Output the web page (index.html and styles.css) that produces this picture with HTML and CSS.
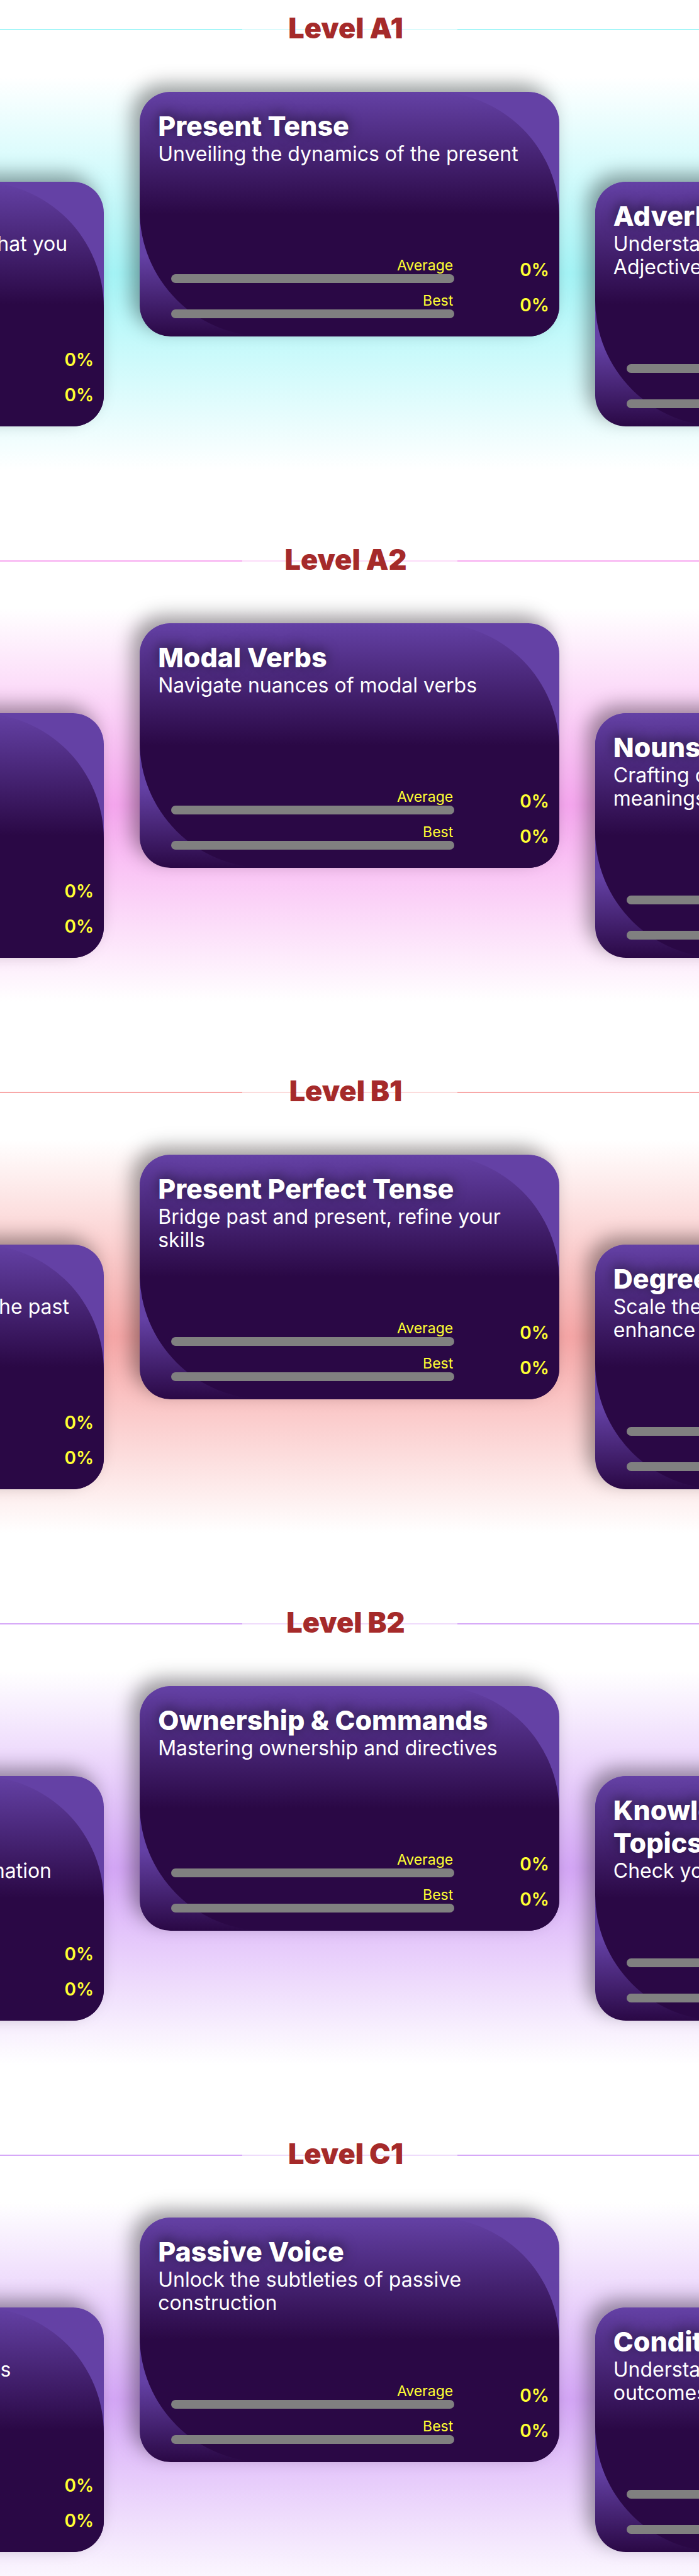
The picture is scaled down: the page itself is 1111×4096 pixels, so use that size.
FILE: index.html
```html
<!DOCTYPE html>
<html lang="en">
<head>
<meta charset="utf-8">
<meta name="viewport" content="width=device-width, initial-scale=1">
<title>English levels</title>
<link rel="stylesheet" href="styles.css">
</head>
<body>
<main class="levels">

  <section class="level aqua">
    <div class="level-head"><h2 class="level-name">Level A1</h2></div>
    <div class="carousel">
      <article class="card"><div class="card-face">
        <h3 class="card-title">Everyday Life</h3>
        <p class="card-text">Shape the story of everything that you<br>know</p>
        <div class="scores">
          <div class="score"><div class="score-track"><span class="score-label">Average</span><div class="bar"></div></div><span class="score-value">0%</span></div>
          <div class="score"><div class="score-track"><span class="score-label">Best</span><div class="bar"></div></div><span class="score-value">0%</span></div>
        </div>
      </div></article>
      <article class="card"><div class="card-face">
        <h3 class="card-title">Present Tense</h3>
        <p class="card-text">Unveiling the dynamics of the present</p>
        <div class="scores">
          <div class="score"><div class="score-track"><span class="score-label">Average</span><div class="bar"></div></div><span class="score-value">0%</span></div>
          <div class="score"><div class="score-track"><span class="score-label">Best</span><div class="bar"></div></div><span class="score-value">0%</span></div>
        </div>
      </div></article>
      <article class="card"><div class="card-face">
        <h3 class="card-title">Adverbs</h3>
        <p class="card-text">Understanding Adverbs and<br>Adjectives</p>
        <div class="scores">
          <div class="score"><div class="score-track"><span class="score-label">Average</span><div class="bar"></div></div><span class="score-value">0%</span></div>
          <div class="score"><div class="score-track"><span class="score-label">Best</span><div class="bar"></div></div><span class="score-value">0%</span></div>
        </div>
      </div></article>
    </div>
  </section>

  <section class="level pink">
    <div class="level-head"><h2 class="level-name">Level A2</h2></div>
    <div class="carousel">
      <article class="card"><div class="card-face">
        <h3 class="card-title">Past Tense</h3>
        <p class="card-text">Talk about yesterday</p>
        <div class="scores">
          <div class="score"><div class="score-track"><span class="score-label">Average</span><div class="bar"></div></div><span class="score-value">0%</span></div>
          <div class="score"><div class="score-track"><span class="score-label">Best</span><div class="bar"></div></div><span class="score-value">0%</span></div>
        </div>
      </div></article>
      <article class="card"><div class="card-face">
        <h3 class="card-title">Modal Verbs</h3>
        <p class="card-text">Navigate nuances of modal verbs</p>
        <div class="scores">
          <div class="score"><div class="score-track"><span class="score-label">Average</span><div class="bar"></div></div><span class="score-value">0%</span></div>
          <div class="score"><div class="score-track"><span class="score-label">Best</span><div class="bar"></div></div><span class="score-value">0%</span></div>
        </div>
      </div></article>
      <article class="card"><div class="card-face">
        <h3 class="card-title">Nouns</h3>
        <p class="card-text">Crafting clear and precise<br>meanings</p>
        <div class="scores">
          <div class="score"><div class="score-track"><span class="score-label">Average</span><div class="bar"></div></div><span class="score-value">0%</span></div>
          <div class="score"><div class="score-track"><span class="score-label">Best</span><div class="bar"></div></div><span class="score-value">0%</span></div>
        </div>
      </div></article>
    </div>
  </section>

  <section class="level coral">
    <div class="level-head"><h2 class="level-name">Level B1</h2></div>
    <div class="carousel">
      <article class="card"><div class="card-face">
        <h3 class="card-title">Past Perfect</h3>
        <p class="card-text">Examine actions completed in the past</p>
        <div class="scores">
          <div class="score"><div class="score-track"><span class="score-label">Average</span><div class="bar"></div></div><span class="score-value">0%</span></div>
          <div class="score"><div class="score-track"><span class="score-label">Best</span><div class="bar"></div></div><span class="score-value">0%</span></div>
        </div>
      </div></article>
      <article class="card"><div class="card-face">
        <h3 class="card-title">Present Perfect Tense</h3>
        <p class="card-text">Bridge past and present, refine your skills</p>
        <div class="scores">
          <div class="score"><div class="score-track"><span class="score-label">Average</span><div class="bar"></div></div><span class="score-value">0%</span></div>
          <div class="score"><div class="score-track"><span class="score-label">Best</span><div class="bar"></div></div><span class="score-value">0%</span></div>
        </div>
      </div></article>
      <article class="card"><div class="card-face">
        <h3 class="card-title">Degrees</h3>
        <p class="card-text">Scale the comparisons and<br>enhance precision</p>
        <div class="scores">
          <div class="score"><div class="score-track"><span class="score-label">Average</span><div class="bar"></div></div><span class="score-value">0%</span></div>
          <div class="score"><div class="score-track"><span class="score-label">Best</span><div class="bar"></div></div><span class="score-value">0%</span></div>
        </div>
      </div></article>
    </div>
  </section>

  <section class="level violet">
    <div class="level-head"><h2 class="level-name">Level B2</h2></div>
    <div class="carousel">
      <article class="card"><div class="card-face">
        <h3 class="card-title">Questions &amp;<br>Answers</h3>
        <p class="card-text">Questions that affirm the information</p>
        <div class="scores">
          <div class="score"><div class="score-track"><span class="score-label">Average</span><div class="bar"></div></div><span class="score-value">0%</span></div>
          <div class="score"><div class="score-track"><span class="score-label">Best</span><div class="bar"></div></div><span class="score-value">0%</span></div>
        </div>
      </div></article>
      <article class="card"><div class="card-face">
        <h3 class="card-title">Ownership &amp; Commands</h3>
        <p class="card-text">Mastering ownership and directives</p>
        <div class="scores">
          <div class="score"><div class="score-track"><span class="score-label">Average</span><div class="bar"></div></div><span class="score-value">0%</span></div>
          <div class="score"><div class="score-track"><span class="score-label">Best</span><div class="bar"></div></div><span class="score-value">0%</span></div>
        </div>
      </div></article>
      <article class="card"><div class="card-face">
        <h3 class="card-title">Knowledge of<br>Topics</h3>
        <p class="card-text">Check your knowledge</p>
        <div class="scores">
          <div class="score"><div class="score-track"><span class="score-label">Average</span><div class="bar"></div></div><span class="score-value">0%</span></div>
          <div class="score"><div class="score-track"><span class="score-label">Best</span><div class="bar"></div></div><span class="score-value">0%</span></div>
        </div>
      </div></article>
    </div>
  </section>

  <section class="level violet">
    <div class="level-head"><h2 class="level-name">Level C1</h2></div>
    <div class="carousel">
      <article class="card"><div class="card-face">
        <h3 class="card-title">Clauses</h3>
        <p class="card-text">Combine clauses into sentences</p>
        <div class="scores">
          <div class="score"><div class="score-track"><span class="score-label">Average</span><div class="bar"></div></div><span class="score-value">0%</span></div>
          <div class="score"><div class="score-track"><span class="score-label">Best</span><div class="bar"></div></div><span class="score-value">0%</span></div>
        </div>
      </div></article>
      <article class="card"><div class="card-face">
        <h3 class="card-title">Passive Voice</h3>
        <p class="card-text">Unlock the subtleties of passive construction</p>
        <div class="scores">
          <div class="score"><div class="score-track"><span class="score-label">Average</span><div class="bar"></div></div><span class="score-value">0%</span></div>
          <div class="score"><div class="score-track"><span class="score-label">Best</span><div class="bar"></div></div><span class="score-value">0%</span></div>
        </div>
      </div></article>
      <article class="card"><div class="card-face">
        <h3 class="card-title">Conditionals</h3>
        <p class="card-text">Understanding possible<br>outcomes</p>
        <div class="scores">
          <div class="score"><div class="score-track"><span class="score-label">Average</span><div class="bar"></div></div><span class="score-value">0%</span></div>
          <div class="score"><div class="score-track"><span class="score-label">Best</span><div class="bar"></div></div><span class="score-value">0%</span></div>
        </div>
      </div></article>
    </div>
  </section>

</main>
</body>
</html>
```
FILE: styles.css
```css
* { box-sizing: border-box; }
body {
  margin: 0;
  background: #fff;
  color: #fff;
  font-family: Inter, "Liberation Sans", sans-serif;
  overflow-x: hidden;
}
h2, h3, p { margin: 0; }

.levels { height: 100vh; overflow: hidden; }
.aqua { --tone: #a6f6f8; }
.pink { --tone: #f7a8f0; }
.coral { --tone: #f8a8a8; }
.violet { --tone: #d6a8f8; }

.level { height: 845px; }
.level-head {
  display: flex;
  justify-content: center;
  height: 94px;
  background: linear-gradient(var(--tone), var(--tone)) center / 100% 2px no-repeat;
}
.level-name {
  width: 342px;
  padding-right: 12px;
  background: rgba(255, 255, 255, .6);
  color: #a52a2a;
  font-size: 45px;
  font-weight: 900;
  line-height: 90px;
  text-align: center;
}

/* The current topic sits in the middle, its neighbours run off both edges. */
.carousel {
  display: flex;
  justify-content: center;
  gap: 57px;
  height: 682px;
  padding-top: 52px;
  background: linear-gradient(#fff 28px, var(--tone) 50%, #fff 654px);
}
.card {
  flex: 0 0 60%;
  height: 389px;
  border-radius: 49px;
  overflow: hidden;
  background: linear-gradient(#6441a5 67%, #2a0845);
  box-shadow: -12px -12px 30px rgba(0, 0, 0, .38);
}
.card:nth-child(odd) { margin-top: 143px; }
.card-face {
  display: flex;
  flex-direction: column;
  height: 100%;
  padding: 28px 16px 22px 29px;
  border-radius: 0 200px 0 200px;
  background: linear-gradient(#6441a5, #2a0845 50%);
}
.card-title {
  font-size: 43px;
  font-weight: 800;
  line-height: 52px;
  text-shadow: 0 -4px 20px rgba(0, 0, 0, .6);
}
.card-text {
  padding-right: 24px;
  font-size: 32px;
  line-height: 37px;
}

.scores { margin-top: auto; padding-left: 21px; }
.score {
  display: flex;
  justify-content: space-between;
  align-items: center;
  height: 56px;
  color: #ffff33;
}
.score-track { flex: 0 0 450px; text-align: right; }
.score-label {
  display: block;
  padding-right: 2px;
  font-size: 23px;
  line-height: 28px;
}
.bar { height: 14px; border-radius: 7px; background: #808080; }
.score-value { font-size: 28px; font-weight: 600; }
```
